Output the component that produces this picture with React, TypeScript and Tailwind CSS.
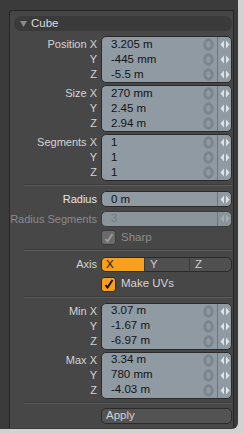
import React from "react";

const font = { fontFamily: '"Liberation Sans", Arial, sans-serif' };

function Arrows({ dim }: { dim?: boolean }) {
  return (
    <svg width="10" height="9" viewBox="0 0 10 9" className="shrink-0">
      <path d="M4 0.5 L0.5 4.5 L4 8.5 Z" fill={dim ? "#a4acb2" : "#dfe3e6"} />
      <path d="M6 0.5 L9.5 4.5 L6 8.5 Z" fill={dim ? "#a4acb2" : "#dfe3e6"} />
    </svg>
  );
}

function Ring() {
  return (
    <svg width="11" height="13" viewBox="0 0 11 13" className="shrink-0">
      <ellipse cx="5.5" cy="6.5" rx="3.7" ry="4.8" fill="none" stroke="#7b858d" strokeWidth="3" />
    </svg>
  );
}

function FieldRow({ value, ring = true, dim, tall = true }: { value: string; ring?: boolean; dim?: boolean; tall?: boolean }) {
  return (
    <div className={`flex items-center ${tall ? "h-[15px]" : "h-[14px]"}`}>
      <span className={`flex-1 pl-[9px] text-[11.5px] leading-none ${dim ? "text-[#6f7a82]" : "text-[#141414]"}`}>
        {value}
      </span>
      <div className="flex w-[14px] justify-center">{ring && <Ring />}</div>
      <div className="ml-[2px] flex h-full w-[14px] items-center justify-center border-l border-[#6c767d]">
        <Arrows dim={dim} />
      </div>
    </div>
  );
}

function Group({ labels, values }: { labels: string[]; values: string[] }) {
  return (
    <div className="flex">
      <div className="flex w-[91px] flex-col pt-[1px] pr-[4px]">
        {labels.map((l, i) => (
          <div key={i} className="flex h-[15px] items-center justify-end text-[11px] text-[#d4d4d4]">
            {l}
          </div>
        ))}
      </div>
      <div className="w-[131px] overflow-hidden rounded-[5px] border border-[#2a2a2a] bg-[#8f9aa2]">
        {values.map((v, i) => (
          <FieldRow key={i} value={v} />
        ))}
      </div>
    </div>
  );
}

function Separator() {
  return <div className="ml-[14px] mr-[1px] h-px bg-[#5c5c5c] shadow-[0_-1px_0_#3c3c3c]" />;
}

export default function App() {
  return (
    <div className="flex h-[433px] w-[244px] bg-[#d2d2d2]" style={font}>
      <div className="h-[429px] w-[238px] rounded-br-[6px] bg-[#3b3b3b] pl-[9px] pt-[10px]">
        <div className="h-[418px] w-[225px] rounded-tl-[3px] border-l border-r border-t border-[#262626] bg-[#474747] pt-[5px]">
          {/* header */}
          <div className="ml-[4px] mr-[1px] flex h-[15px] items-center rounded-[7px] bg-[#3a3a3a] pl-[6px] text-[11.5px] text-[#dcdcdc]">
            <svg width="7" height="6" viewBox="0 0 7 6" className="mr-[4px]">
              <path d="M0 0 H7 L3.5 6 Z" fill="#8a8a8a" />
            </svg>
            Cube
          </div>

          <div className="mt-[5px] flex flex-col gap-[2px]">
            <Group labels={["Position X", "Y", "Z"]} values={["3.205 m", "-445 mm", "-5.5 m"]} />
            <Group labels={["Size X", "Y", "Z"]} values={["270 mm", "2.45 m", "2.94 m"]} />
            <Group labels={["Segments X", "Y", "Z"]} values={["1", "1", "1"]} />
          </div>

          <div className="mb-[5px] mt-[4px]">
            <Separator />
          </div>

          {/* radius */}
          <div className="flex items-center">
            <div className="w-[91px] pr-[4px] text-right text-[11px] text-[#e6e6e6]">Radius</div>
            <div className="w-[131px] overflow-hidden rounded-[5px] border border-[#2a2a2a] bg-[#8f9aa2]">
              <FieldRow value="0 m" ring={false} tall={false} />
            </div>
          </div>
          <div className="mt-[3px] flex items-center">
            <div className="w-[91px] whitespace-nowrap pr-[4px] text-right text-[11px] text-[#8a8a8a]">
              Radius Segments
            </div>
            <div className="w-[131px] overflow-hidden rounded-[5px] border border-[#3c3c3c] bg-[#8a949b]">
              <FieldRow value="3" ring={false} dim tall={false} />
            </div>
          </div>
          <div className="mt-[3px] flex h-[15px] items-center pl-[91px]">
            <div className="flex h-[15px] w-[15px] items-center justify-center rounded-[3px] border border-[#3a3a3a] bg-[#6a6a6a]">
              <svg width="10" height="10" viewBox="0 0 10 10">
                <path d="M1.5 6 L3.5 8.5 L8.5 1" fill="none" stroke="#9a9a9a" strokeWidth="2" />
              </svg>
            </div>
            <span className="ml-[5px] text-[11.5px] text-[#8c8c8c]">Sharp</span>
          </div>

          <div className="my-[5px]">
            <Separator />
          </div>

          {/* axis */}
          <div className="flex items-center">
            <div className="w-[91px] pr-[4px] text-right text-[11px] text-[#d4d4d4]">Axis</div>
            <div className="flex h-[15px] w-[131px] overflow-hidden rounded-[5px] border border-[#2a2a2a] bg-[#505050] text-[11.5px]">
              <div className="flex w-[42px] items-center bg-[#f7a01a] pl-[4px] text-[#111]">X</div>
              <div className="flex w-[45px] items-center border-l border-[#3a3a3a] pl-[5px] text-[#cfcfcf]">Y</div>
              <div className="flex flex-1 items-center border-l border-[#3a3a3a] pl-[5px] text-[#cfcfcf]">Z</div>
            </div>
          </div>
          <div className="mt-[4px] flex h-[15px] items-center pl-[91px]">
            <div className="flex h-[15px] w-[15px] items-center justify-center rounded-[3px] border border-[#2a2a2a] bg-[#f7a01a]">
              <svg width="10" height="10" viewBox="0 0 10 10">
                <path d="M1.5 6 L3.5 8.5 L8.5 1" fill="none" stroke="#111" strokeWidth="2" />
              </svg>
            </div>
            <span className="ml-[5px] text-[11.5px] text-[#d4d4d4]">Make UVs</span>
          </div>

          <div className="my-[5px]">
            <Separator />
          </div>

          <div className="flex flex-col gap-[2px]">
            <Group labels={["Min X", "Y", "Z"]} values={["3.07 m", "-1.67 m", "-6.97 m"]} />
            <Group labels={["Max X", "Y", "Z"]} values={["3.34 m", "780 mm", "-4.03 m"]} />
          </div>

          <div className="mb-[4px] mt-[4px]">
            <Separator />
          </div>

          <div className="flex pl-[91px]">
            <div className="flex h-[16px] w-[131px] items-center rounded-[5px] border border-[#2a2a2a] bg-[#535353] pl-[4px] text-[11.5px] text-[#d4d4d4]">
              Apply
            </div>
          </div>
        </div>
      </div>
    </div>
  );
}
